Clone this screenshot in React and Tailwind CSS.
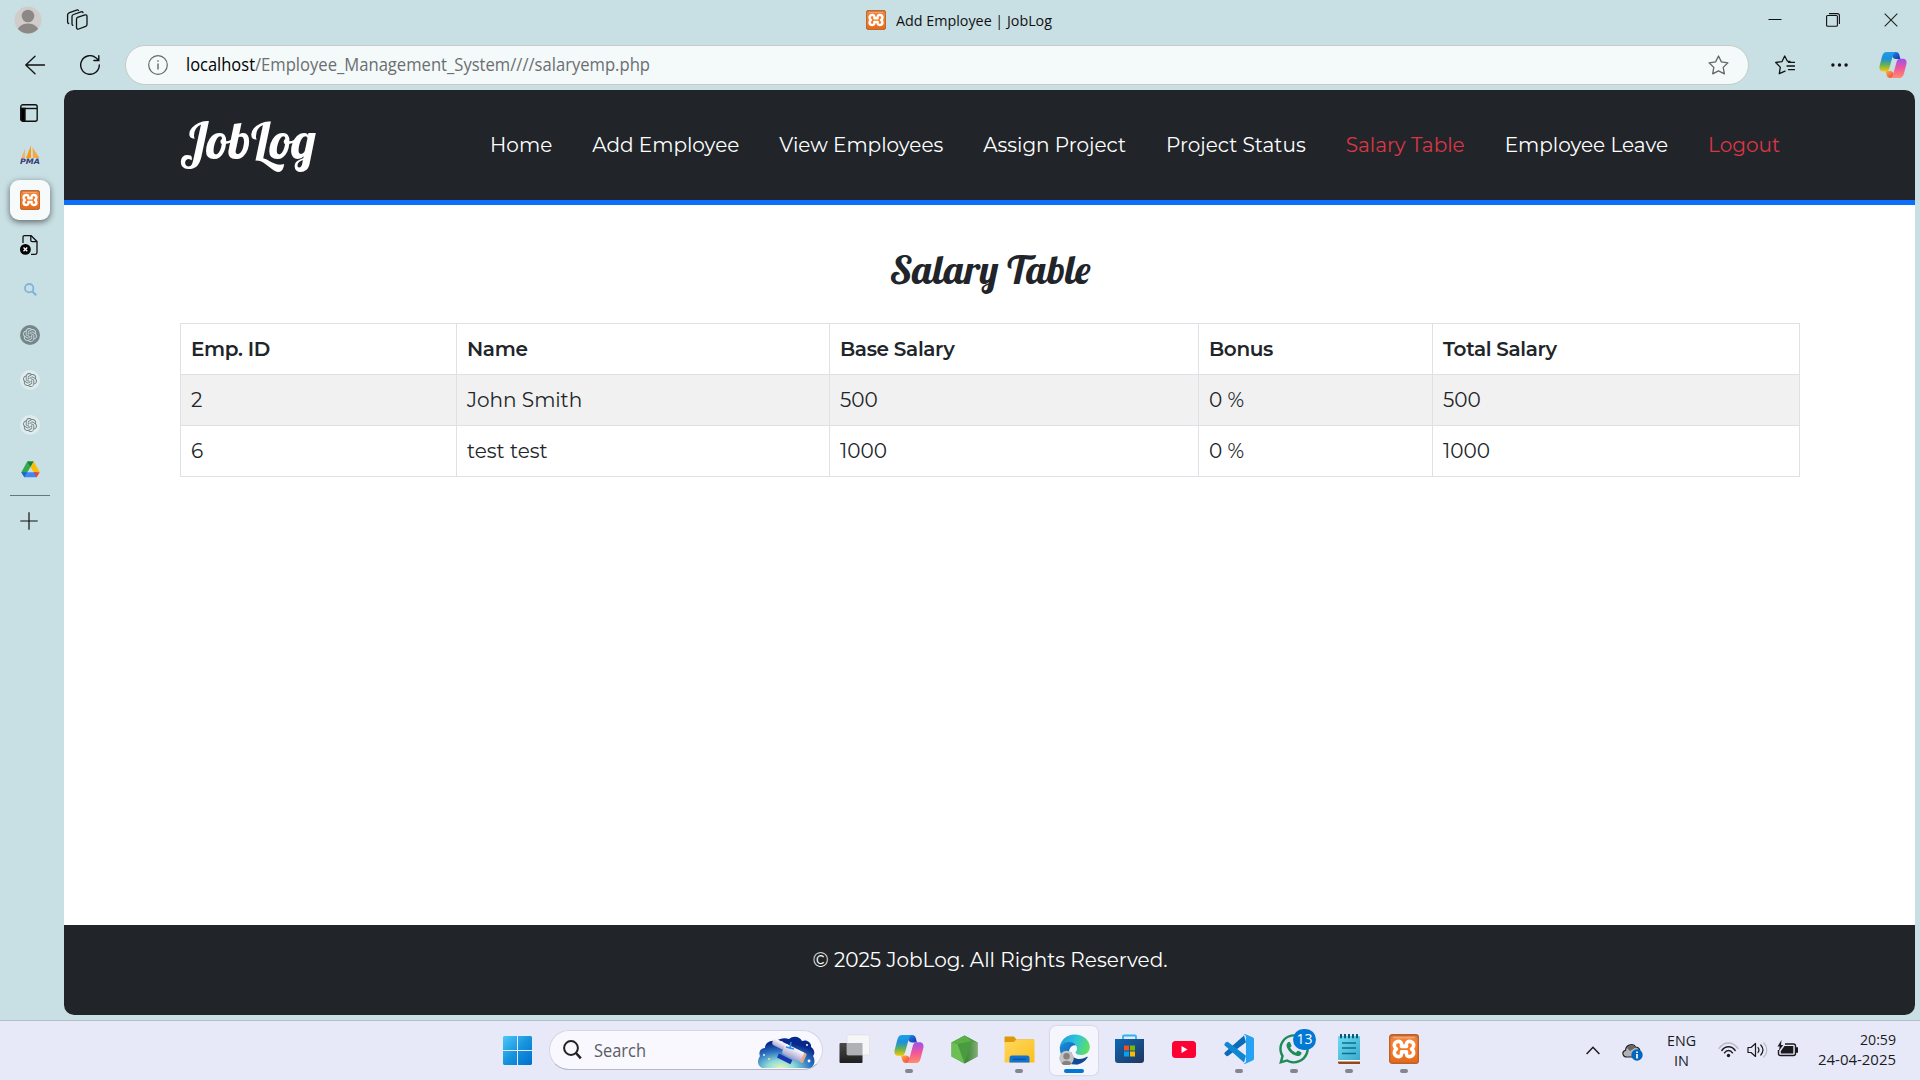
import React, { useLayoutEffect, useRef } from "react";
import { FaWhatsapp } from "react-icons/fa";

/* Text run stretched or squeezed to an exact advance width. */
function Fit({ w, className = "", children }) {
  const inner = useRef(null);
  useLayoutEffect(() => {
    const el = inner.current;
    el.style.transform = "none";
    const natural = el.getBoundingClientRect().width;
    el.style.transform = `scaleX(${w / natural})`;
  }, [w, children]);
  return (
    <span className={`inline-block whitespace-nowrap ${className}`} style={{ width: w }}>
      <span ref={inner} className="inline-block origin-left">{children}</span>
    </span>
  );
}

function Xampp({ size }) {
  return (
    <svg width={size} height={size} viewBox="0 0 30 30">
      <defs>
        <linearGradient id="xa" x1="0" y1="0" x2="0" y2="1">
          <stop offset="0" stopColor="#c9662a" />
          <stop offset=".15" stopColor="#f0833a" />
          <stop offset=".5" stopColor="#fb7a24" />
          <stop offset="1" stopColor="#e06a1c" />
        </linearGradient>
      </defs>
      <rect x=".7" y=".7" width="28.6" height="28.6" rx="2.5" fill="url(#xa)" stroke="#b9622c" strokeWidth="1.4" />
      <path d="M3 2.5h24l-2 2H5z" fill="#f7b58a" opacity=".7" />
      <path d="M12.500 12.400h5C16.800 8.600 18.500 7.400 20.500 7.400c2.400 0 4.200 1.700 4.200 3.900 0 1.700-.9 2.800-2.200 3.700 1.300.9 2.200 2 2.200 3.700 0 2.200-1.800 3.900-4.200 3.900-2 0-3.700-1.200-3-4.800h-5c.7 3.600-1 4.800-3 4.800-2.400 0-4.200-1.700-4.200-3.900 0-1.700.9-2.800 2.200-3.700-1.300-.9-2.200-2-2.200-3.700 0-2.200 1.800-3.900 4.200-3.900 2 0 3.700 1.200 3 5z" fill="#f97a26" stroke="#fff" strokeWidth="3.600" strokeLinejoin="round" />
    </svg>
  );
}

function Person({ size }) {
  return (
    <svg width={size} height={size} viewBox="0 0 28 28">
      <clipPath id="pc"><circle cx="14" cy="14" r="13.5" /></clipPath>
      <circle cx="14" cy="14" r="13.5" fill="#d0ccc9" />
      <g clipPath="url(#pc)" fill="#8c8886">
        <circle cx="14" cy="10" r="6.3" />
        <ellipse cx="14" cy="26" rx="11" ry="8.400" />
      </g>
    </svg>
  );
}

function Copilot({ size }) {
  return (
    <svg width={size} height={size} viewBox="0 0 28 28">
      <defs>
        <linearGradient id="ca" x1="0" y1="0" x2="0" y2="1">
          <stop offset="0" stopColor="#1ba0ec" />
          <stop offset=".35" stopColor="#1f8fd8" />
          <stop offset=".65" stopColor="#5fb05e" />
          <stop offset="1" stopColor="#f5c800" />
        </linearGradient>
        <linearGradient id="cb" x1="0" y1="0" x2="0" y2="1">
          <stop offset="0" stopColor="#9b52ee" />
          <stop offset=".5" stopColor="#f0569a" />
          <stop offset="1" stopColor="#ff8d6b" />
        </linearGradient>
        <linearGradient id="cc" x1="0" y1="0" x2="1" y2="1">
          <stop offset="0" stopColor="#1d8ce8" />
          <stop offset="1" stopColor="#1630b0" />
        </linearGradient>
        <linearGradient id="cd" x1="0" y1="0" x2="1" y2="1">
          <stop offset="0" stopColor="#ffb03a" />
          <stop offset="1" stopColor="#ef3d4c" />
        </linearGradient>
      </defs>
      <path d="M15 1h1.500c2.300 0 3.300 1 3.900 3l1 4h-4.500c-2 0-3-1-4-3z" fill="url(#cc)" />
      <path d="M13 27h-1.500c-2.300 0-3.300-1-3.900-3l-1-4H11c2 0 3 1 4 3z" fill="url(#cd)" />
      <path d="M7.500 1H17c-2 .5-2.800 2-3.300 4l-3.400 12.500c-.6 2-1.700 2.800-3.500 2.800H4c-2.500 0-4-2-3.500-5L3.200 5C4 2.300 5.300 1 7.500 1z" fill="url(#ca)" />
      <path d="M20.500 27H11c2-.5 2.800-2 3.300-4l3.400-12.500c.6-2 1.700-2.800 3.500-2.800H24c2.500 0 4 2 3.500 5L24.800 23c-.8 2.700-2.100 4-4.300 4z" fill="url(#cb)" />
    </svg>
  );
}

const KNOT =
  "M22.2819 9.8211a5.9847 5.9847 0 0 0-.5157-4.9108 6.0462 6.0462 0 0 0-6.5098-2.9A6.0651 6.0651 0 0 0 4.9807 4.1818a5.9847 5.9847 0 0 0-3.9977 2.9 6.0462 6.0462 0 0 0 .7427 7.0966 5.98 5.98 0 0 0 .511 4.9107 6.051 6.051 0 0 0 6.5146 2.9001A5.9847 5.9847 0 0 0 13.2599 24a6.0557 6.0557 0 0 0 5.7718-4.2058 5.9894 5.9894 0 0 0 3.9977-2.9001 6.0557 6.0557 0 0 0-.7475-7.0729zm-9.022 12.6081a4.4755 4.4755 0 0 1-2.8764-1.0408l.1419-.0804 4.7783-2.7582a.7948.7948 0 0 0 .3927-.6813v-6.7369l2.02 1.1686a.071.071 0 0 1 .038.052v5.5826a4.504 4.504 0 0 1-4.4945 4.4944zm-9.6607-4.1254a4.4708 4.4708 0 0 1-.5346-3.0137l.142.0852 4.783 2.7582a.7712.7712 0 0 0 .7806 0l5.8428-3.3685v2.3324a.0804.0804 0 0 1-.0332.0615L9.74 19.9502a4.4992 4.4992 0 0 1-6.1408-1.6464zM2.3408 7.8956a4.485 4.485 0 0 1 2.3655-1.9728V11.6a.7664.7664 0 0 0 .3879.6765l5.8144 3.3543-2.0201 1.1685a.0757.0757 0 0 1-.071 0l-4.8303-2.7865A4.504 4.504 0 0 1 2.3408 7.872zm16.5963 3.8558L13.1038 8.364 15.1192 7.2a.0757.0757 0 0 1 .071 0l4.8303 2.7913a4.4944 4.4944 0 0 1-.6765 8.1042v-5.6772a.79.79 0 0 0-.407-.667zm2.0107-3.0231l-.142-.0852-4.7735-2.7818a.7759.7759 0 0 0-.7854 0L9.409 9.2297V6.8974a.0662.0662 0 0 1 .0284-.0615l4.8303-2.7866a4.4992 4.4992 0 0 1 6.6802 4.66zM8.3065 12.863l-2.02-1.1638a.0804.0804 0 0 1-.038-.0567V6.0742a4.4992 4.4992 0 0 1 7.3757-3.4537l-.142.0805L8.704 5.459a.7948.7948 0 0 0-.3927.6813zm1.0976-2.3654l2.602-1.4998 2.6069 1.4998v2.9994l-2.5974 1.4997-2.6067-1.4997Z";

function Knot({ bg, fg }) {
  return (
    <svg width="20" height="20" viewBox="0 0 20 20">
      <circle cx="10" cy="10" r="10" fill={bg} />
      <path d={KNOT} fill={fg} transform="translate(3 3) scale(.583)" />
    </svg>
  );
}

function TopBar() {
  return (
    <div className="flex h-10 items-center">
      <div className="ml-3.5 h-7 w-7"><Person size={28} /></div>
      <svg className="ml-6" width="22" height="22" viewBox="0 0 22 22" fill="none" stroke="#111" strokeWidth="1.3" strokeLinecap="round" strokeLinejoin="round">
        <path d="M11.500 8.300l7.500-2.400c1.200-.4 2 .3 2 1.400v8.200c0 .9-.4 1.500-1.300 1.800l-7 2.700c-1.200.4-2.200-.2-2.200-1.400v-8c0-1.200.2-2 1-2.300z" />
        <path d="M17 3.700c-.3-.9-1-1.200-2-.9L7.500 5.500C6.400 5.900 6 6.600 6 7.600v7.400c0 .8.300 1.200.9 1.400" />
        <path d="M12.500 1.500c-.4-.6-1-.7-1.900-.4L3.500 3.600C2.200 4.100 1.600 4.700 1.600 6v7c0 .9.400 1.400 1.100 1.500" />
      </svg>
      <div className="ml-[778px] flex h-10 items-center">
        <Xampp size={20} />
        <Fit w={156} className="ml-[10px] font-['Open_Sans','Noto_Sans',sans-serif] text-[15px] leading-5 text-[#111]">Add Employee | JobLog</Fit>
      </div>
      <svg className="mt-px ml-auto" width="14" height="14" viewBox="0 0 14 14"><path d="M.5 5.500h13" stroke="#111" /></svg>
      <svg className="ml-11" width="14" height="14" viewBox="0 0 14 14" fill="none" stroke="#111">
        <rect x=".6" y="2.500" width="10.800" height="10.800" rx="1" strokeWidth="1.100" />
        <path d="M3 .6h8.400c1.300 0 2 .8 2 2V11" strokeWidth="1.100" />
      </svg>
      <svg className="mr-[22px] ml-11" width="14" height="14" viewBox="0 0 14 14" stroke="#222" strokeWidth="1.100"><path d="M.7.7l12.600 12.600M13.300.7L.7 13.300" /></svg>
    </div>
  );
}

function AddressRow() {
  return (
    <div className="flex h-[50px] items-center">
      <svg className="ml-[25px]" width="20" height="20" viewBox="0 0 20 20" fill="none" stroke="#111" strokeWidth="1.300" strokeLinecap="round" strokeLinejoin="round">
        <path d="M19.500 10H.8M10 1.200L.8 10l9.200 8.700" />
      </svg>
      <svg className="ml-[35px]" width="20" height="20" viewBox="0 0 20 20" fill="none" stroke="#111" strokeWidth="1.400" strokeLinecap="round">
        <path d="M19.300 10A9.300 9.300 0 1 1 15.500 2.500L18.500 5M18.800.8v4.700h-4.900" />
      </svg>
      <div className="ml-[25px] flex h-10 w-[1624px] items-center rounded-full border border-[#c6cacb] bg-[#f4f9fa] pr-[19px] pl-[22px]">
        <svg width="20" height="20" viewBox="0 0 20 20" fill="none" stroke="#666" strokeWidth="1.200">
          <circle cx="10" cy="10" r="9.300" />
          <path d="M10 8.500v6M10 5.200v1.600" strokeWidth="1.400" />
        </svg>
        <span className="mb-0.5 ml-[18px] font-['Open_Sans','Noto_Sans',sans-serif] text-[17.600px] leading-6">
          <Fit w={69} className="text-black">localhost</Fit>
          <Fit w={395} className="text-[#6b6f70]">/Employee_Management_System////salaryemp.php</Fit>
        </span>
        <svg className="ml-auto" width="21" height="20" viewBox="0 0 21 20" fill="none" stroke="#666" strokeWidth="1.300" strokeLinejoin="round">
          <path d="M10.500 1l2.900 5.900 6.500.9-4.700 4.600 1.200 6.400-5.900-3-5.800 3 1.100-6.400L1.100 7.800l6.500-.9z" />
        </svg>
      </div>
      <svg className="ml-[26px]" width="20" height="20" viewBox="0 0 20 20" fill="none" stroke="#111" strokeWidth="1.300" strokeLinecap="round" strokeLinejoin="round">
        <path d="M15 6.500l-2.600-.3L9.700 1 6.900 6.700.7 7.500l4.600 4.600-1 6.600 5.700-2.600M13.500 7.300h6M12 11h7.500M13.500 14.700h6" />
      </svg>
      <svg className="ml-9" width="17" height="4" viewBox="0 0 17 4" fill="#111"><circle cx="1.900" cy="2" r="1.700" /><circle cx="8.500" cy="2" r="1.700" /><circle cx="15.100" cy="2" r="1.700" /></svg>
      <div className="ml-[31px]"><Copilot size={28} /></div>
    </div>
  );
}

function Rail() {
  return (
    <aside className="flex w-16 shrink-0 flex-col pl-2.5">
      <div className="flex h-[45px] w-10 items-center justify-center pr-0.5">
        <svg width="18" height="18" viewBox="0 0 18 18" fill="none" stroke="#111" strokeWidth="1.400"><rect x=".8" y=".8" width="16.400" height="16.400" rx="2" /><path d="M1 4.500h16" /><path d="M1 4.500h4v12.500H2.500L1 15.500z" fill="#000" /></svg>
      </div>
      <div className="flex h-[38px] w-10 items-end justify-center pb-2">
        <svg width="21" height="20" viewBox="0 0 21 20">
          <path d="M5 3.500v9.500H1.200z" fill="#f3b46a" /><path d="M11 .5v12.500H6z" fill="#f89c0e" /><path d="M12.500 2.500l7 10.500h-6.500z" fill="#f5a848" />
          <text x="0" y="19" textLength="20" lengthAdjust="spacingAndGlyphs" fontFamily="DejaVu Sans, sans-serif" fontWeight="bold" fontStyle="italic" fontSize="7.500" fill="#3b3d78">PMA</text>
        </svg>
      </div>
      <div className="mt-[7px] flex h-10 w-10 items-center justify-center rounded-[9px] bg-[#f6fafb] shadow-[0_2px_6px_rgba(0,0,0,0.55)]"><Xampp size={20} /></div>
      <div className="mt-0.5 flex h-[45px] w-10 items-center justify-center pr-0.5">
        <svg width="18" height="20" viewBox="0 0 18 20" fill="none" stroke="#111" strokeWidth="1.300" strokeLinejoin="round">
          <path d="M3 8V2.200C3 1.200 3.600.7 4.500.7h6.700L17 6.500v11c0 1.200-.6 1.800-1.800 1.800H11" /><path d="M10.800.9v4.400c0 .9.500 1.400 1.400 1.400h4.600" />
          <circle cx="5.400" cy="14.400" r="5.400" fill="#000" stroke="none" /><path d="M3.500 12.500l3.800 3.800M7.300 12.500l-3.800 3.800" stroke="#fff" />
        </svg>
      </div>
      <div className="flex h-[45px] w-10 items-center justify-center">
        <svg width="13" height="13" viewBox="0 0 13 13" fill="none" stroke="#7fb3dc"><circle cx="5.200" cy="5.200" r="4.200" strokeWidth="1.800" /><path d="M8.500 8.500l3.700 3.700" strokeWidth="2.200" /></svg>
      </div>
      <div className="flex h-[45px] w-10 items-center justify-center"><Knot bg="#75878a" fg="#c9d9dc" /></div>
      <div className="flex h-[45px] w-10 items-center justify-center"><Knot bg="#dfecee" fg="#728083" /></div>
      <div className="flex h-[45px] w-10 items-center justify-center"><Knot bg="#dfecee" fg="#728083" /></div>
      <div className="flex h-[45px] w-10 items-center justify-center">
        <svg width="19" height="17" viewBox="0 0 19 17">
          <path d="M6.300.5h6.400L3.400 16.300.3 11.200z" fill="#34a853" /><path d="M6.300.5h6.400L9.500 6z" fill="#188038" />
          <path d="M12.700.5l6 10.700h-6L9.500 6z" fill="#fbbc04" /><path d="M3.400 16.300l2.900-5.100h9.500v5.100z" fill="#4285f4" /><path d="M.3 11.200h6l-2.900 5.100z" fill="#1967d2" /><path d="M12.700 11.200h6l-3 5.100z" fill="#ea4335" />
        </svg>
      </div>
      <div className="mt-[3px] h-px w-10 shrink-0 bg-[#66777a]" />
      <svg className="mt-4 ml-2.5" width="18" height="18" viewBox="0 0 18 18" stroke="#111" strokeWidth="1.200"><path d="M9 .3v17.400M.3 9h17.400" /></svg>
    </aside>
  );
}

const NAV = [
  ["Home", "text-white"],
  ["Add Employee", "text-white"],
  ["View Employees", "text-white"],
  ["Assign Project", "text-white"],
  ["Project Status", "text-white"],
  ["Salary Table", "text-[#dc3545]"],
  ["Employee Leave", "text-white"],
  ["Logout", "text-[#dc3545]"],
];

const EMPLOYEES = [
  ["2", "John Smith", "500", "0 %", "500"],
  ["6", "test test", "1000", "0 %", "1000"],
];

function Page() {
  return (
    <main className="flex h-[925px] w-[1851px] flex-col overflow-hidden rounded-[10px] bg-white font-['Montserrat','Inter',sans-serif] text-[20px] leading-[30px] text-[#212529]">
      <header className="flex h-[115px] items-center justify-between border-b-[5px] border-[#0d6efd] bg-[#212529] pr-[135px] pl-[116px]">
        <span className="pb-[9px] font-['Lobster','Liberation_Serif',serif] text-[50px] leading-none text-white">JobLog</span>
        <nav className="flex gap-10 whitespace-nowrap">
          {NAV.map(([label, tone]) => (
            <span key={label} className={tone}>{label}</span>
          ))}
        </nav>
      </header>
      <section className="flex-1 pt-10 pl-[116px]">
        <h1 className="w-[1620px] text-center font-['Lobster','Liberation_Serif',serif] text-[40px] leading-[48px]">Salary Table</h1>
        <table className="mt-[30px] w-[1619px] table-fixed border-collapse">
          <colgroup>
            <col className="w-[276px]" /><col className="w-[373px]" /><col className="w-[369px]" /><col className="w-[234px]" /><col className="w-[367px]" />
          </colgroup>
          <thead>
            <tr className="h-[51px] text-left">
              {["Emp. ID", "Name", "Base Salary", "Bonus", "Total Salary"].map((t) => (
                <th key={t} className="border border-[#dee2e6] px-2.5 py-0 font-semibold tracking-[-0.35px]">{t}</th>
              ))}
            </tr>
          </thead>
          <tbody>
            {EMPLOYEES.map((row, r) => (
              <tr key={r} className="h-[51px] odd:bg-[#f1f1f1]">
                {row.map((t, i) => (
                  <td key={i} className="border border-[#dee2e6] px-2.5 py-0">{t}</td>
                ))}
              </tr>
            ))}
          </tbody>
        </table>
      </section>
      <footer className="h-[90px] bg-[#212529] pt-5 pl-px text-center text-white">© 2025 JobLog. All Rights Reserved.</footer>
    </main>
  );
}

function Slot({ dot, active, children }) {
  return (
    <div className="flex w-[55px] justify-center">
      <div className={`relative mt-[5px] flex h-[49px] w-12 items-center justify-center rounded-md pb-[3px] ${active ? "bg-[#f4f5fd] shadow-[0_0_1px_1px_rgba(120,120,160,0.15)]" : ""}`}>
        {children}
        {dot && <span className={`absolute bottom-0.5 h-1 rounded-full ${active ? "w-5 bg-[#0078d4]" : "w-2 bg-[#85858f]"}`} />}
      </div>
    </div>
  );
}

function SearchArt() {
  return (
    <svg width="58" height="33" viewBox="0 0 58 33">
      <defs>
        <radialGradient id="sky" cx=".4" cy="1" r=".95">
          <stop offset="0" stopColor="#e6f5b8" /><stop offset=".25" stopColor="#8fdcd8" /><stop offset=".55" stopColor="#2f78c4" /><stop offset=".85" stopColor="#08278c" />
        </radialGradient>
        <linearGradient id="tube" x1="0" y1="0" x2="0" y2="1"><stop offset="0" stopColor="#fff" /><stop offset="1" stopColor="#a9a0cf" /></linearGradient>
      </defs>
      <path d="M5 32C-1 29 1 23 3 20c-2-4 1-8 5-8 0-5 5-8 10-7 4-2 9-4 14-2 5-4 11-2 13 2 5-2 10 2 9 6 4 3 4 7 2 9 3 5 1 11-3 12z" fill="url(#sky)" />
      <g transform="rotate(26 30 17)">
        <rect x="12" y="9" width="18" height="7" rx="3" fill="url(#tube)" /><rect x="25" y="9" width="22" height="10.500" rx="2.500" fill="url(#tube)" /><rect x="45.500" y="9" width="3" height="10.500" rx="1.500" fill="#e7a98a" />
        <path d="M23 21h15v4.500H23z" fill="#1b35b0" />
      </g>
      <path d="M34 6l-1 7M29 11l8 2" stroke="#2f8be8" strokeWidth="1.500" />
      <g fill="#fff"><circle cx="7" cy="19" r=".9" /><circle cx="25" cy="6" r=".8" /><circle cx="50" cy="9" r="1" /><circle cx="52" cy="25" r="1.400" /><circle cx="12" cy="23" r=".9" fill="#fbe88a" /></g>
    </svg>
  );
}

function Taskbar() {
  return (
    <div className="flex h-[60px] border-t border-[#b9bccb] bg-[#e7e9f8] font-['Open_Sans','Noto_Sans',sans-serif]">
      <svg className="mt-[15px] ml-[503px] shrink-0" width="29" height="29" viewBox="0 0 29 29">
        <defs><linearGradient id="win" x1="0" y1="0" x2="1" y2="1"><stop offset="0" stopColor="#4cc9f9" /><stop offset=".5" stopColor="#1793dd" /><stop offset="1" stopColor="#006fcf" /></linearGradient></defs>
        <path d="M1 0h13v14H0V1zM15 0h13l1 1v13H15zM0 15h14v14H1l-1-1zM15 15h14v13l-1 1H15z" fill="url(#win)" />
      </svg>
      <div className="mt-[9px] ml-[17px] flex h-10 w-[274px] shrink-0 items-center rounded-full border border-b-[#b6b6c8] border-[#d5d5e6] bg-[#f8f8fe] pl-[13px]">
        <svg width="19" height="20" viewBox="0 0 19 20" fill="none" stroke="#222" strokeWidth="2"><circle cx="8" cy="8" r="6.900" /><path d="M13 13l4.800 5.300" strokeWidth="2.600" /></svg>
        <Fit w={52} className="ml-3 text-[17.500px] leading-6 text-[#5c5c64]">Search</Fit>
        <div className="mt-1 ml-[111px]"><SearchArt /></div>
      </div>
      <div className="ml-[3.500px] flex">
        <Slot>
          <svg width="31" height="30" viewBox="0 0 31 30">
            <defs><linearGradient id="tv" x1="0" y1="0" x2="0" y2="1"><stop offset="0" stopColor="#4a4a4a" /><stop offset="1" stopColor="#1e1e1e" /></linearGradient></defs>
            <rect x=".5" y="9" width="23" height="20" rx="1" fill="url(#tv)" /><rect x="8" y="1" width="22.500" height="20" rx="1" fill="#f6f6f6" stroke="#dcdce0" strokeWidth=".6" /><path d="M8 9h15.500v12H8z" fill="#b0b1b4" />
          </svg>
        </Slot>
        <Slot dot><Copilot size={30} /></Slot>
        <Slot>
          <svg width="27" height="29" viewBox="0 0 27 29">
            <defs><linearGradient id="hx" x1="0" y1="0" x2="1" y2="0"><stop offset="0" stopColor="#35802f" /><stop offset="1" stopColor="#7fae74" /></linearGradient></defs>
            <path d="M13.500.5l13 7v14l-13 7-13-7v-14z" fill="#4a9a42" /><path d="M.5 7.500l6 1.500 7 19.500-13-7z" fill="#6cbf52" /><path d="M.5 7.500L13.500.5 21 6 6.500 9z" fill="#5bb045" /><path d="M26.500 7.500L21 6l-7.500 22.500 13-7z" fill="url(#hx)" /><path d="M13.500.5l13 7L21 6z" fill="#4c9c44" />
          </svg>
        </Slot>
        <Slot dot>
          <svg width="31" height="27" viewBox="0 0 31 27">
            <defs><linearGradient id="fo" x1="0" y1="0" x2="1" y2="1"><stop offset="0" stopColor="#ffd75e" /><stop offset="1" stopColor="#fcbf1f" /></linearGradient></defs>
            <path d="M.5 1.500Q.5.500 1.500.5H10l2.500 3H30v3H.5z" fill="#dd9a08" /><path d="M.5 6h9l3-2.500H30q.5 0 .5 1V26.500H.5z" fill="url(#fo)" /><path d="M5.500 26.500V22q0-2.500 2.500-2.500h15q2.500 0 2.500 2.500v4.500z" fill="#1273cf" /><path d="M9 23.200h13" stroke="#0a4da0" strokeWidth="1.200" />
          </svg>
        </Slot>
        <Slot dot active>
          <svg width="31" height="31" viewBox="0 0 31 31">
            <defs>
              <linearGradient id="e1" x1="0" y1=".3" x2="1" y2=".6"><stop offset="0" stopColor="#1b9de2" /><stop offset=".5" stopColor="#2fc6d8" /><stop offset="1" stopColor="#62e05a" /></linearGradient>
              <linearGradient id="e2" x1="0" y1="0" x2="1" y2="1"><stop offset="0" stopColor="#1a90dc" /><stop offset="1" stopColor="#0c4a9c" /></linearGradient>
            </defs>
            <path d="M.8 13C2 5.500 8 .5 15.500.5 24.500.5 30.800 6.500 30.800 13c0 5-4 8-8.300 8-4 0-6-1.500-6-2.500 0-.8 1.500-1.500 1.500-4 0-3.500-3.500-6-7.500-6-4.500 0-8.500 2-9.700 4.500z" fill="url(#e1)" />
            <path d="M.8 13C2 10 6 7.800 10.500 8c3 .2 5.500 1.500 6.700 3.500-4-1-7.200 2.500-7.200 7 0 6 4.500 11 10.500 11.500C9 33 .5 24.500.8 13z" fill="url(#e2)" />
            <path d="M12.500 18c0 4.500 3.500 7 8 7 3 0 5.500-1 7.500-2.200.6-.3 1 .2.600.8C26 27.500 22 30.500 17.500 30.300 12 29 10 22 12.500 18z" fill="#124a92" />
            <g transform="translate(0 16.500) scale(.54)"><circle cx="14" cy="14" r="13.500" fill="#c6c4c2" /><circle cx="14" cy="10.500" r="6" fill="#858280" /><path d="M5 24c2-7 16-7 18 0-4 5-14 5-18 0z" fill="#858280" /></g>
          </svg>
        </Slot>
        <Slot>
          <svg width="29" height="30" viewBox="0 0 29 30">
            <defs><linearGradient id="st" x1="0" y1="0" x2="1" y2="1"><stop offset="0" stopColor="#0d68b4" /><stop offset="1" stopColor="#22355c" /></linearGradient></defs>
            <path d="M8 7V2.500q0-1 1-1h11q1 0 1 1V7" fill="none" stroke="#2bb4f0" strokeWidth="1.800" /><path d="M0 5h29v21q0 3-3 3H3q-3 0-3-3z" fill="url(#st)" />
            <path d="M9 11.500h5v5H9z" fill="#f25022" /><path d="M15 11.500h5v5h-5z" fill="#7fba00" /><path d="M9 17.500h5v5H9z" fill="#00a4ef" /><path d="M15 17.500h5v5h-5z" fill="#ffb900" />
          </svg>
        </Slot>
        <Slot>
          <svg width="24" height="17" viewBox="0 0 24 17"><rect width="24" height="17" rx="3.500" fill="#ff0033" /><path d="M9.500 5v7l6-3.500z" fill="#fff" /></svg>
        </Slot>
        <Slot dot>
          <svg width="30" height="30" viewBox="0 0 30 30">
            <path d="M.7 18.500L20 1.500l2 6.800L4 22q-1 .6-1.800-.2L.7 20.300q-.7-.9 0-1.800z" fill="#0a6cb8" /><path d="M.7 11.500L20 28.500l2-6.800L4 8q-1-.6-1.800.2L.7 9.700q-.7.9 0 1.800z" fill="#1187d4" /><path d="M21.500.3L28.600 3.300Q30 4 30 5.200V24.800q0 1.200-1.300 1.800L21.500 29.700q-1.200.3-2-.7 2.500.6 2.500-2V3q0-2.500-2.500-2 .8-1 2-.7z" fill="#25a3f2" />
          </svg>
        </Slot>
        <Slot dot>
          <FaWhatsapp size={34} color="#1f8b57" className="shrink-0" />
          <span className="absolute top-[3px] right-0.5 flex h-[21px] w-[23px] items-center justify-center rounded-full bg-[#0078d4] pb-px text-[14px] leading-none text-white">13</span>
        </Slot>
        <Slot dot>
          <svg width="22" height="30" viewBox="0 0 22 30">
            <defs><linearGradient id="np" x1="0" y1="0" x2="1" y2="1"><stop offset="0" stopColor="#6ddcf0" /><stop offset="1" stopColor="#3aa9cf" /></linearGradient></defs>
            <path d="M0 26h22v4H1l-1-1z" fill="#93481a" /><path d="M0 26h22v1.500H0z" fill="#fff" /><path d="M0 3q0-1 1-1h20q1 0 1 1v23H0z" fill="url(#np)" />
            <path d="M4 9h14M4 14h14M4 19.500h14" stroke="#0b6f8f" strokeWidth="1.700" /><path d="M3 .5v3M7 .5v3M11 .5v3M15 .5v3M19 .5v3" stroke="#075a78" strokeWidth="2" strokeLinecap="round" />
          </svg>
        </Slot>
        <Slot dot><Xampp size={30} /></Slot>
      </div>
      <div className="mr-6 ml-auto flex h-[58px] items-center text-[14.700px] leading-5 text-[#1b1b1f]">
        <svg width="14" height="9" viewBox="0 0 14 9" fill="none" stroke="#1b1b1f" strokeWidth="1.500"><path d="M.6 8L7 1.300 13.400 8" /></svg>
        <svg className="mt-1 ml-[22px]" width="21" height="18" viewBox="0 0 21 18">
          <path d="M5 14C0 14-.3 8 3.500 7.300 4 1 12 .2 13.500 4c3.500 0 5 3 4 6l-6 4z" fill="#b2b2b2" stroke="#222" strokeWidth="1.200" /><path d="M5 5c3-4 7-3 8.500-.5L8 8z" fill="#666" />
          <circle cx="15" cy="12" r="5.700" fill="#0067c0" /><path d="M15 11v4.500M15 8.400v1.500" stroke="#fff" strokeWidth="1.700" />
        </svg>
        <div className="mb-px ml-6 flex flex-col items-center"><Fit w={29}>ENG</Fit><Fit w={15}>IN</Fit></div>
        <svg className="ml-[22px]" width="21" height="16" viewBox="0 0 21 16" fill="none" stroke="#1b1b1f" strokeWidth="1.400" strokeLinecap="round">
          <path d="M1 6.500C6-.8 15-.8 20 6.500" stroke="#b9bac8" /><path d="M3.800 8.500c3.500-5 10-5 13.400 0M6.500 10.800c2-3 6-3 8 0" /><circle cx="10.500" cy="13.500" r="1.700" fill="#1b1b1f" stroke="none" />
        </svg>
        <svg className="ml-2" width="21" height="16" viewBox="0 0 21 16" fill="none" stroke="#1b1b1f" strokeWidth="1.200" strokeLinecap="round" strokeLinejoin="round">
          <path d="M1 5.500h3L8.500 1.500v13L4 10.500H1z" /><path d="M11 5.500c1.200 1.500 1.200 3.500 0 5M13.800 3c2.600 3 2.600 7 0 10" /><path d="M16.800 1c4 4 4 10 0 14" stroke="#b9bac8" />
        </svg>
        <svg className="mb-[3px] ml-[9px]" width="21" height="17" viewBox="0 0 21 17" fill="none" stroke="#1b1b1f" strokeWidth="1.400">
          <path d="M8 4h8.500q2 0 2 2v7.500q0 2-2 2h-13q-2 0-2-2V10" /><path d="M7.500 6h8.800v7.500H3.800V11z" fill="#1b1b1f" stroke="none" /><path d="M19 8v4h1.500V8z" fill="#1b1b1f" /><path d="M4.500 0L.5 6.500h2.200L1.800 11l4.500-6H4z" fill="#1b1b1f" stroke="none" />
        </svg>
        <div className="mb-[3px] ml-5 flex w-[78px] flex-col items-end"><Fit w={36}>20:59</Fit><Fit w={78}>24-04-2025</Fit></div>
      </div>
    </div>
  );
}

export default function App() {
  return (
    <div className="flex h-[1080px] w-[1920px] flex-col overflow-hidden bg-[#c8dfe3]">
      <TopBar />
      <AddressRow />
      <div className="flex h-[930px] shrink-0">
        <Rail />
        <Page />
      </div>
      <Taskbar />
    </div>
  );
}
